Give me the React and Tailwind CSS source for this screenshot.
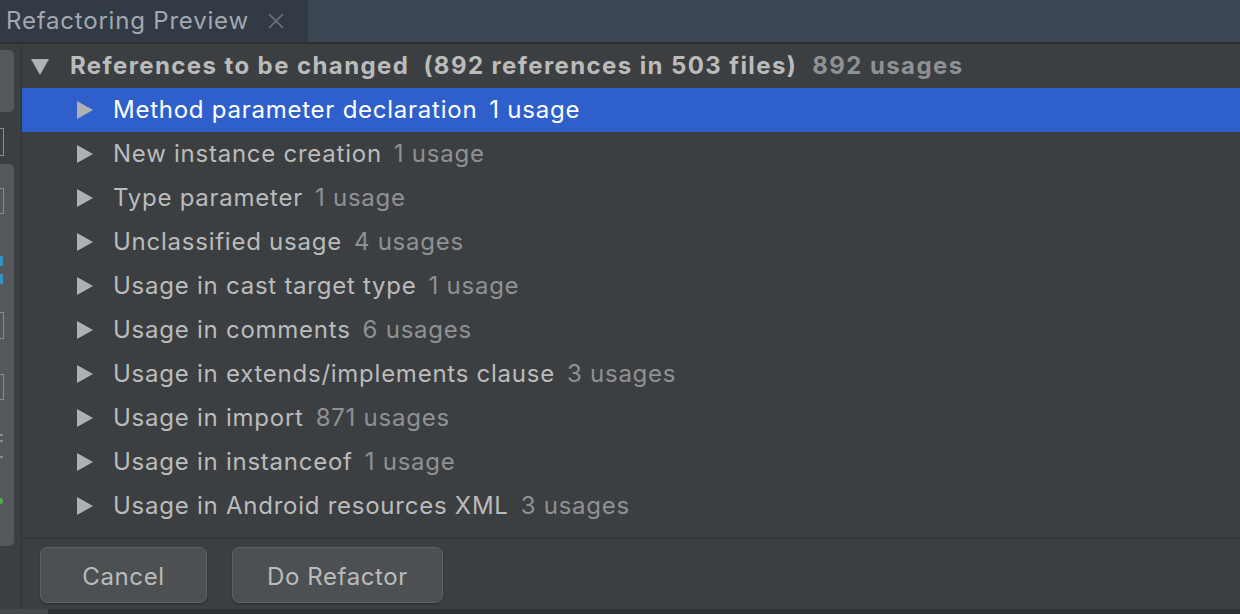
import { X } from "lucide-react";

const rows = [
  ["Method parameter declaration", "1 usage"],
  ["New instance creation", "1 usage"],
  ["Type parameter", "1 usage"],
  ["Unclassified usage", "4 usages"],
  ["Usage in cast target type", "1 usage"],
  ["Usage in comments", "6 usages"],
  ["Usage in extends/implements clause", "3 usages"],
  ["Usage in import", "871 usages"],
  ["Usage in instanceof", "1 usage"],
  ["Usage in Android resources XML", "3 usages"],
];

const Arrow = ({ down }) => (
  <svg width="20" height="20" viewBox="0 0 20 20" className="shrink-0">
    {down ? (
      <polygon points="1,3 19,3 10,19" fill="#afb1b3" />
    ) : (
      <polygon points="2,1 18,10 2,19" fill="#afb1b3" />
    )}
  </svg>
);

const App = () => {
  return (
    <div
      className="w-[1240px] h-[614px] overflow-hidden bg-[#3c3f41] flex flex-col"
      style={{ fontFamily: "Inter, 'Noto Sans', sans-serif" }}
    >
      {/* tab bar */}
      <div className="h-[42px] bg-[#3d4754] flex shrink-0">
        <div className="w-[308px] bg-[#323a45] flex items-center pl-[6px] gap-[14px]">
          <span className="text-[24px] text-[#a3a9b0] tracking-[0.8px]">Refactoring Preview</span>
          <X size={26} strokeWidth={1.5} color="#6c7480" />
        </div>
      </div>
      <div className="h-[2px] bg-[#2d2f31] shrink-0" />

      <div className="flex-1 flex min-h-0">
        {/* left tool strip */}
        <div className="w-[22px] shrink-0 border-r border-[#313335] flex flex-col pt-[6px]">
          <div className="w-[14px] h-[62px] bg-[#55585b] rounded-r-[5px]" />
          <div className="mt-[16px] w-[4px] h-[28px] border border-l-0 border-[#8a8d90]" />
          <div className="mt-[8px] w-[14px] h-[382px] bg-[#55585b] rounded-r-[5px] flex flex-col">
            <div className="mt-[24px] w-[4px] h-[26px] border border-l-0 border-[#8a8d90]" />
            <div className="mt-[42px] w-[3px] h-[10px] bg-[#3592c4]" />
            <div className="mt-[8px] w-[3px] h-[10px] bg-[#3592c4]" />
            <div className="mt-[28px] w-[4px] h-[27px] border border-l-0 border-[#8a8d90]" />
            <div className="mt-[35px] w-[4px] h-[26px] border border-l-0 border-[#8a8d90]" />
            <div className="mt-[34px] w-[3px] h-[2px] bg-[#8a8d90]" />
            <div className="mt-[4px] w-[3px] h-[2px] bg-[#8a8d90]" />
            <div className="mt-[14px] w-[3px] h-[2px] bg-[#8a8d90]" />
            <div className="mt-[40px] w-[3px] h-[6px] bg-[#4fae4b] rounded-r" />
          </div>
        </div>

        {/* main */}
        <div className="flex-1 flex flex-col min-w-0">
          <div className="flex-1 flex flex-col">
            <div className="h-[44px] flex items-center pl-[8px] gap-[20px] text-[24px] font-bold tracking-[1.4px]">
              <Arrow down />
              <span className="text-[#bbbbbb] whitespace-pre">
                References to be changed  (892 references in 503 files)
                <span className="text-[#8f9194] ml-[8px]"> 892 usages</span>
              </span>
            </div>
            {rows.map(([label, count], i) => (
              <div
                key={label}
                className={`h-[44px] flex items-center pl-[53px] gap-[18px] text-[24px] tracking-[0.75px] ${
                  i === 0 ? "bg-[#2f5fcb]" : ""
                }`}
              >
                <Arrow />
                <span className={i === 0 ? "text-white" : "text-[#bbbbbb]"}>
                  {label}
                  <span className={i === 0 ? "text-white ml-[12px]" : "text-[#8f9194] ml-[12px]"}>
                    {count}
                  </span>
                </span>
              </div>
            ))}
          </div>

          <div className="h-[71px] border-t border-[#2f3133] flex items-start pt-[8px] pl-[18px] gap-[25px] shrink-0">
            <button className="w-[167px] h-[56px] pt-[4px] rounded-[7px] bg-[#4c5052] border border-[#5e6163] text-[24px] tracking-[0.6px] text-[#bbbbbb] shadow-[0_1px_2px_rgba(0,0,0,0.35)]">
              Cancel
            </button>
            <button className="w-[211px] h-[56px] pt-[4px] rounded-[7px] bg-[#4c5052] border border-[#5e6163] text-[24px] tracking-[0.6px] text-[#bbbbbb] shadow-[0_1px_2px_rgba(0,0,0,0.35)]">
              Do Refactor
            </button>
          </div>
        </div>
      </div>

      {/* bottom status strip */}
      <div className="h-[5px] bg-[#2e3032] flex shrink-0">
        <div className="w-[48px] bg-[#45484a]" />
      </div>
    </div>
  );
};

export default App;
